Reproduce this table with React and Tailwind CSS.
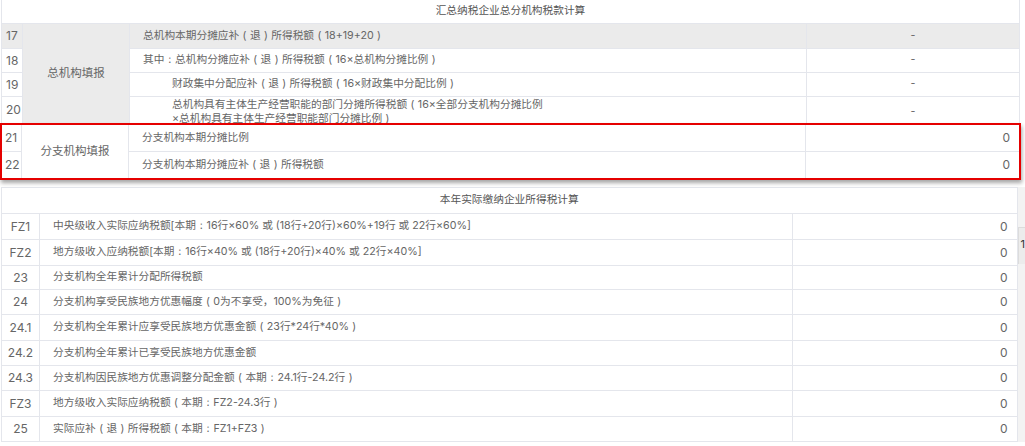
import React from 'react';

const cjk = { fontFamily: 'Inter, "Noto Sans CJK SC", sans-serif' };

// full-width punctuation drawn centred in a 1em box, as the original font does
const fw = (text) =>
  text.split(/([（）：])/).map((part, i) => {
    if (part === '（') return <span key={i} className="inline-block w-[1em] text-center">(</span>;
    if (part === '）') return <span key={i} className="inline-block w-[1em] text-center">)</span>;
    if (part === '：') return <span key={i} className="inline-block w-[1em] text-center">:</span>;
    return part;
  });

const headRows = [
  { no: '17', text: '总机构本期分摊应补（退）所得税额（18+19+20）', indent: false, gray: true, h: 'h-[25px]' },
  { no: '18', text: '其中：总机构分摊应补（退）所得税额（16×总机构分摊比例）', indent: false, h: 'h-[24px]' },
  { no: '19', text: '财政集中分配应补（退）所得税额（16×财政集中分配比例）', indent: true, h: 'h-[24px]' },
  { no: '20', text: '总机构具有主体生产经营职能的部门分摊所得税额（16×全部分支机构分摊比例', text2: '×总机构具有主体生产经营职能部门分摊比例）', indent: true, h: 'h-[27px]' },
];

const branchRows = [
  { no: '21', text: '分支机构本期分摊比例', h: 'h-[27px]' },
  { no: '22', text: '分支机构本期分摊应补（退）所得税额', h: 'h-[26px]' },
];

const yearRows = [
  { no: 'FZ1', text: '中央级收入实际应纳税额[本期：16行×60% 或 (18行+20行)×60%+19行 或 22行×60%]', h: 'h-[26px]' },
  { no: 'FZ2', text: '地方级收入应纳税额[本期：16行×40% 或 (18行+20行)×40% 或 22行×40%]', h: 'h-[26px]' },
  { no: '23', text: '分支机构全年累计分配所得税额', h: 'h-[24px]' },
  { no: '24', text: '分支机构享受民族地方优惠幅度（0为不享受，100%为免征）', h: 'h-[25px]' },
  { no: '24.1', text: '分支机构全年累计应享受民族地方优惠金额（23行*24行*40%）', h: 'h-[26px]' },
  { no: '24.2', text: '分支机构全年累计已享受民族地方优惠金额', h: 'h-[25px]' },
  { no: '24.3', text: '分支机构因民族地方优惠调整分配金额（本期：24.1行-24.2行）', h: 'h-[25px]' },
  { no: 'FZ3', text: '地方级收入实际应纳税额（本期：FZ2-24.3行）', h: 'h-[26px]' },
  { no: '25', text: '实际应补（退）所得税额（本期：FZ1+FZ3）', h: 'h-[25px]' },
];

export default function App() {
  return (
    <div className="w-[1025px] h-[446px] overflow-hidden bg-white text-[10.7px] text-[#666]" style={cjk}>
      {/* 汇总纳税企业总分机构税款计算 */}
      <div className="ml-[1px] w-[1019px] border-l border-r border-[#e4e6ec]">
        <div className="h-[24px] flex items-center justify-center text-[#555] border-b border-[#e4e6ec]">
          汇总纳税企业总分机构税款计算
        </div>
        <div className="grid grid-cols-[21px_107px_677px_1fr]">
          {headRows.map((r, i) => (
            <React.Fragment key={r.no}>
              <div className={`${r.h} flex items-center pl-[4px] text-[12px] border-r border-b border-[#e4e6ec] ${r.gray ? 'bg-[#ebebeb]' : ''}`} style={{ gridRow: i + 1, gridColumn: 1 }}>
                {r.no}
              </div>
              {i === 0 && (
                <div className="flex items-center justify-center bg-[#ebebeb] border-r border-b border-[#e4e6ec] text-[11.5px]" style={{ gridRow: '1 / span 4', gridColumn: 2 }}>
                  总机构填报
                </div>
              )}
              <div className={`${r.h} overflow-hidden border-r border-b border-[#e4e6ec] ${r.indent ? 'pl-[42px]' : 'pl-[13px]'} ${r.gray ? 'bg-[#ebebeb]' : ''} ${r.text2 ? 'pt-[1px] leading-[14px]' : 'flex items-center'}`} style={{ gridRow: i + 1, gridColumn: 3 }}>
                {r.text2 ? (
                  <>
                    <div>{fw(r.text)}</div>
                    <div>{fw(r.text2)}</div>
                  </>
                ) : (
                  <span>{fw(r.text)}</span>
                )}
              </div>
              <div className={`${r.h} flex items-center justify-center border-b border-[#e4e6ec] ${r.gray ? 'bg-[#ebebeb]' : ''} ${r.text2 ? 'pt-[5px]' : ''}`} style={{ gridRow: i + 1, gridColumn: 4 }}>
                -
              </div>
            </React.Fragment>
          ))}
        </div>
      </div>

      {/* highlighted 分支机构填报 */}
      <div className="w-[1021px] -mt-[1px] border-2 border-[#e50000] shadow-[1px_3px_4px_rgba(0,0,0,0.35)] relative">
        <div className="grid grid-cols-[20px_107px_677px_1fr] bg-white">
          {branchRows.map((r, i) => (
            <React.Fragment key={r.no}>
              <div className={`${r.h} flex items-center pl-[3px] text-[12px] border-r border-[#e4e6ec] ${i === 0 ? 'border-b' : ''}`} style={{ gridRow: i + 1, gridColumn: 1 }}>
                {r.no}
              </div>
              {i === 0 && (
                <div className="flex items-center justify-center border-r border-[#e4e6ec] text-[11.5px]" style={{ gridRow: '1 / span 2', gridColumn: 2 }}>
                  分支机构填报
                </div>
              )}
              <div className={`${r.h} flex items-center pl-[13px] border-r border-[#e4e6ec] ${i === 0 ? 'border-b' : ''}`} style={{ gridRow: i + 1, gridColumn: 3 }}>
                <span>{fw(r.text)}</span>
              </div>
              <div className={`${r.h} flex items-center justify-end pr-[9px] text-[12px] border-[#e4e6ec] ${i === 0 ? 'border-b' : ''}`} style={{ gridRow: i + 1, gridColumn: 4 }}>
                0
              </div>
            </React.Fragment>
          ))}
        </div>
      </div>

      {/* 本年实际缴纳企业所得税计算 */}
      <div className="mt-[7px] flex">
        <div className="ml-[1px] w-[1019px] border-l border-r border-t border-[#e4e6ec]">
          <div className="h-[26px] flex items-center justify-center text-[#555] border-b border-[#e4e6ec]">
            本年实际缴纳企业所得税计算
          </div>
          {yearRows.map((r) => (
            <div key={r.no} className={`${r.h} flex border-b border-[#e4e6ec]`}>
              <div className="w-[38px] flex items-center justify-center text-[12px] border-r border-[#e4e6ec]">{r.no}</div>
              <div className="w-[753px] flex items-center pl-[13px] border-r border-[#e4e6ec]">
                <span>{fw(r.text)}</span>
              </div>
              <div className="flex-1 flex items-center justify-end pr-[9px] text-[12px]">0</div>
            </div>
          ))}
        </div>
        <div className="flex-1 flex flex-col bg-[#f3f3f3]">
          <div className="h-[40px]" />
          <div className="h-[37px] bg-[#ececec] border-t border-l border-[#dcdcdc] pl-[2px] pt-[8px] text-[11px] text-[#333] overflow-hidden">1</div>
        </div>
      </div>
    </div>
  );
}
